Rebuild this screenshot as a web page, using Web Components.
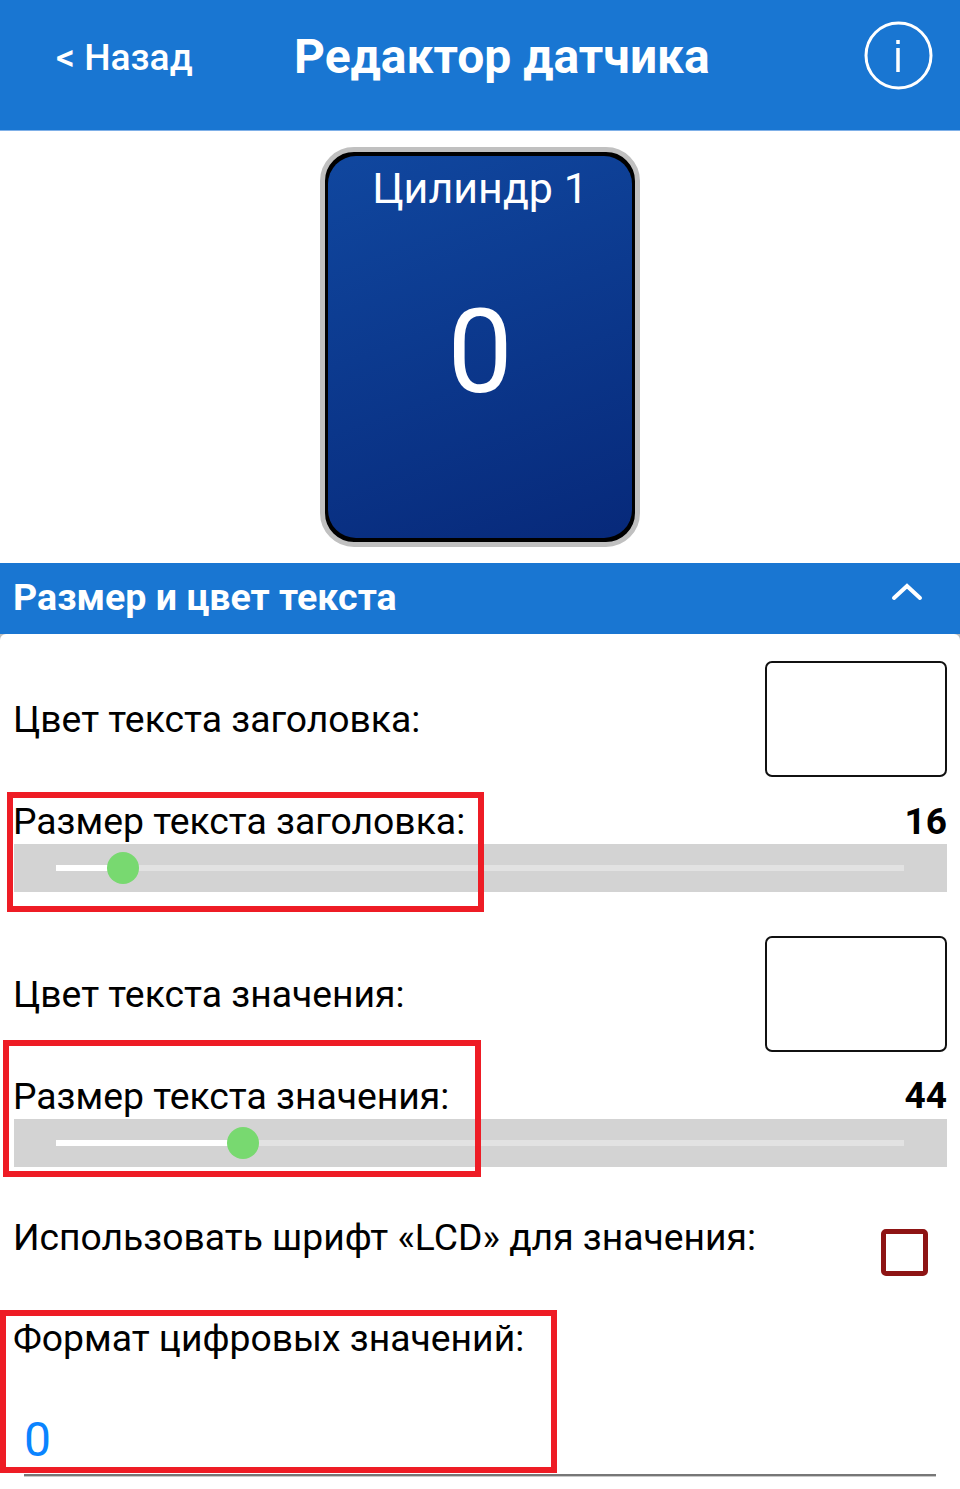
<!DOCTYPE html>
<html lang="ru"><head><meta charset="utf-8"><style>
html,body{margin:0;padding:0;background:#fff}
body{width:960px;height:1489px;overflow:hidden;position:relative;font-family:Roboto,"Liberation Sans",sans-serif;color:#000}
</style></head><body>
<app-header></app-header>
<sensor-card></sensor-card>
<section-bar></section-bar>
<main-panel>
<color-row style="margin-top:27px">Цвет текста заголовка:</color-row>
<slider-row style="margin-top:16px" value="16" pos="67">Размер текста заголовка:</slider-row>
<color-row style="margin-top:44px">Цвет текста значения:</color-row>
<slider-row style="margin-top:16px" value="44" pos="187" vshift="0">Размер текста значения:</slider-row>
<check-row>Использовать шрифт «LCD» для значения:</check-row>
<format-field>Формат цифровых значений:</format-field>
</main-panel>
<red-box style="left:7px;top:792px;width:477px;height:120px"></red-box>
<red-box style="left:3px;top:1040px;width:478px;height:137px"></red-box>
<red-box style="left:0;top:1310px;width:557px;height:163px"></red-box>
<script>
function def(name,html){customElements.define(name,class extends HTMLElement{constructor(){super();this.attachShadow({mode:'open'}).innerHTML=html(this)}})}
def('app-header',()=>`<style>:host{display:flex;align-items:center;height:131px;padding-bottom:1px;background:#1976d2;color:#fff;box-sizing:border-box;border-bottom:1px solid #7fb0e8}
.b{font:500 37.2px/40px Roboto,sans-serif;margin:0 0 0 56px;width:238px;position:relative;top:-8px;white-space:nowrap}
.t{font:700 48px/54px Roboto,sans-serif;position:relative;top:-8px;white-space:nowrap}
svg{margin-left:auto;margin-right:27px;position:relative;top:-9px}</style>
<span class="b">&lt; Назад</span><span class="t">Редактор датчика</span>
<svg width="69" height="69" viewBox="0 0 69 69" fill="none" stroke="#fff"><circle cx="34.5" cy="34.5" r="32.5" stroke-width="3"/><path d="M34 19v4M34 27v24" stroke-width="3.5"/></svg>`);
def('sensor-card',()=>`<style>:host{display:block;box-sizing:border-box;width:320px;height:400px;margin:16px auto 0;border:5px solid #c0c0c0;border-radius:34px;background:#000;padding:4px 3px;overflow:hidden}
.i{height:100%;border-radius:28px;background:linear-gradient(160deg,#10479f,#07297a);color:#fff;text-align:center;display:flex;flex-direction:column;align-items:center}
.n{font:400 43px/52px Roboto,sans-serif;margin-top:6px;width:100%;position:relative;left:0}
.v{font:400 116px/132px Roboto,sans-serif;margin-top:72px}</style>
<div class="i"><div class="n">Цилиндр 1</div><div class="v">0</div></div>`);
def('section-bar',()=>`<style>:host{display:flex;align-items:center;justify-content:space-between;height:71px;margin-top:16px;background:#1976d2;color:#fff}
.t{font:700 37.6px/44px Roboto,sans-serif;margin-left:13px;position:relative;top:-2px}
svg{margin-right:36px;position:relative;top:-8px}</style>
<span class="t">Размер и цвет текста</span>
<svg width="34" height="20" viewBox="0 0 34 20" fill="none" stroke="#fff" stroke-width="4" stroke-linecap="round"><path d="M4 17 17 5l13 12"/></svg>`);
def('main-panel',()=>`<style>:host{display:block;background:linear-gradient(#bdbdbd,#bdbdbd) top/100% 6px no-repeat}
.p{display:flow-root;background:#fff;border-radius:6px 6px 0 0}</style><div class="p"><slot></slot></div>`);
def('color-row',()=>`<style>:host{display:flex;align-items:center;justify-content:space-between;padding:0 13.5px 0 13px;height:116px}
.s{font:400 37.3px/42px Roboto,sans-serif}
.b{box-sizing:border-box;width:182px;height:116px;border:2.5px solid #111;border-radius:7px;background:#fff}</style>
<span class="s"><slot></slot></span><div class="b"></div>`);
def('slider-row',e=>`<style>:host{display:block;padding:0 13px 0 14px}
.h{display:flex;justify-content:space-between;height:51px;font:400 37.3px/56px Roboto,sans-serif;margin-left:-1px}
.v{font-weight:700;font-size:37px;position:relative;top:${e.getAttribute('vshift')||1}px}
.r{height:48px;background:#d3d3d3;padding:0 43px 0 42px;display:flex;align-items:center}
.t{flex:1;height:6px;background:#e2e2e2;position:relative}
.f{position:absolute;left:0;top:0;height:6px;background:#fff;width:${e.getAttribute('pos')}px}
.o{position:absolute;top:-13px;width:32px;height:32px;border-radius:50%;background:#78d970;left:${e.getAttribute('pos')-16}px}</style>
<div class="h"><span><slot></slot></span><span class="v">${e.getAttribute('value')}</span></div>
<div class="r"><div class="t"><div class="f"></div><div class="o"></div></div></div>`);
def('check-row',()=>`<style>:host{display:flex;justify-content:space-between;padding:0 32px 0 13px;margin-top:47px;height:55px}
.s{font:400 37.25px/46px Roboto,sans-serif}
.c{box-sizing:border-box;width:47px;height:47px;border:5px solid #8e1414;border-radius:5px;margin-top:15px}</style>
<span class="s"><slot></slot></span><div class="c"></div>`);
def('format-field',()=>`<style>:host{display:block;padding:0 24px 0 13px;margin-top:46px}
.s{font:400 37.3px/46px Roboto,sans-serif;display:block}
.v{font:400 48px/54px Roboto,sans-serif;color:#0a84ff;margin:52px 0 0 11px;display:block}
.l{height:2px;background:#777;border-bottom:1px solid #c8c8c8;margin:7px 0 0 11px}</style>
<span class="s"><slot></slot></span><span class="v">0</span><div class="l"></div>`);
def('red-box',()=>`<style>:host{display:block;position:absolute;box-sizing:border-box;border:6px solid #ee1c25}</style>`);
</script></body></html>
